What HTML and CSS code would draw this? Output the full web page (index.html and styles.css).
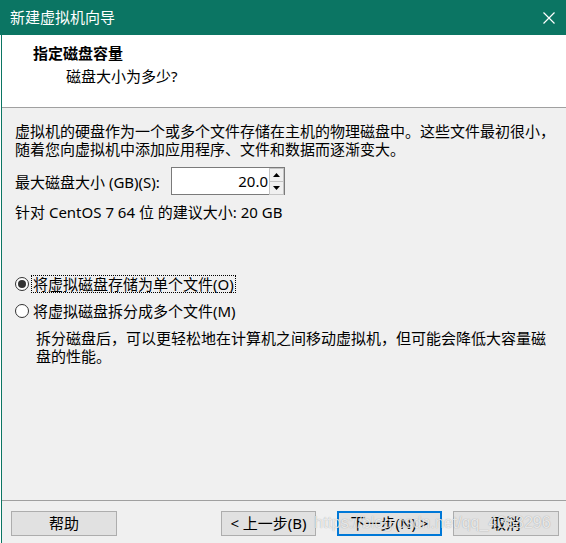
FILE: index.html
```html
<!DOCTYPE html>
<html>
<head>
<meta charset="utf-8">
<link rel="stylesheet" href="styles.css">
</head>
<body>
<div class="titlebar">
  <span class="title">新建虚拟机向导</span>
  <svg class="close" width="12" height="12" viewBox="0 0 12 12"><path d="M0.5 0.5 L11.5 11.5 M11.5 0.5 L0.5 11.5" stroke="#fff" stroke-width="1.2" fill="none"/></svg>
</div>
<div class="window">
  <div class="header">
    <div class="h-title">指定磁盘容量</div>
    <div class="h-sub">磁盘大小为多少?</div>
  </div>
  <div class="content">
    <p class="intro">虚拟机的硬盘作为一个或多个文件存储在主机的物理磁盘中。这些文件最初很小，<br>随着您向虚拟机中添加应用程序、文件和数据而逐渐变大。</p>
    <div class="size-row">
      <span class="label">最大磁盘大小 (GB)(S):</span>
      <div class="spin">
        <span class="spin-val">20.0</span>
        <div class="spin-btns">
          <div class="sbtn"><svg width="7" height="4" viewBox="0 0 7 4"><path d="M0 4 L3.5 0 L7 4 Z" fill="#000"/></svg></div>
          <div class="sbtn"><svg width="7" height="4" viewBox="0 0 7 4"><path d="M0 0 L3.5 4 L7 0 Z" fill="#000"/></svg></div>
        </div>
      </div>
    </div>
    <p class="advice">针对 CentOS 7 64 位 的建议大小: 20 GB</p>
    <div class="radios">
      <div class="radio-row">
        <span class="radio checked"></span>
        <span class="rlabel focus">将虚拟磁盘存储为单个文件(O)</span>
      </div>
      <div class="radio-row">
        <span class="radio"></span>
        <span class="rlabel">将虚拟磁盘拆分成多个文件(M)</span>
      </div>
      <p class="desc">拆分磁盘后，可以更轻松地在计算机之间移动虚拟机，但可能会降低大容量磁<br>盘的性能。</p>
    </div>
  </div>
  <div class="footer">
    <div class="btn help">帮助</div>
    <div class="btn back">&lt; 上一步(B)</div>
    <div class="btn next">下一步(N) &gt;</div>
    <div class="btn cancel">取消</div>
    <div class="watermark">https://blog.csdn.net/qq_4368296</div>
  </div>
</div>
</body>
</html>
```
FILE: styles.css
```css
html { background: #fff; }
body {
  margin: 0;
  width: 566px;
  height: 543px;
  overflow: hidden;
  font-family: "Noto Sans", "Noto Sans CJK SC", sans-serif;
  font-size: 15px;
  color: #000;
}
.titlebar {
  height: 35px;
  background: #0b7563;
  color: #fff;
  display: flex;
  align-items: center;
  justify-content: space-between;
  padding: 0 11px 0 10px;
}
.title { font-size: 15px; line-height: 35px; }
.close { display: block; margin-top: 1px; }
.window {
  margin-left: 1px;
  border-left: 1px solid #0b7563;
  height: 508px;
  background: #f0f0f0;
  display: flex;
  flex-direction: column;
  position: relative;
}
.header {
  background: #fff;
  border-bottom: 1px solid #a0a0a0;
  padding: 8px 0 0 31px;
  box-sizing: border-box;
  height: 73px;
}
.h-title { font-weight: bold; line-height: 20px; height: 20px; }
.h-sub { line-height: 20px; padding-left: 33px; margin-top: 3px; }
.content {
  padding: 14px 0 0 13px;
  flex: 1;
}
p { margin: 0; }
.intro { line-height: 18px; }
.size-row {
  display: flex;
  align-items: center;
  margin-top: 9px;
  height: 28px;
}
.label { width: 156px; }
.spin {
  width: 114px;
  height: 28px;
  box-sizing: border-box;
  border: 1px solid #7a7a7a;
  background: #fff;
  display: flex;
}
.spin-val {
  flex: 1;
  text-align: right;
  line-height: 26px;
  padding-right: 1px;
}
.spin-btns {
  width: 15px;
  display: flex;
  flex-direction: column;
}
.sbtn {
  flex: 1;
  background: #f0f0f0;
  border: 1px solid #c4c4c4;
  margin: 0 0 -1px 0;
  display: flex;
  align-items: center;
  justify-content: center;
}
.advice { line-height: 18px; margin-top: 8px; }
.radios { margin-top: 54px; }
.radio-row {
  display: flex;
  align-items: center;
  height: 18px;
  margin-bottom: 9px;
}
.radio {
  width: 14px;
  height: 14px;
  box-sizing: border-box;
  border: 1px solid #333;
  border-radius: 50%;
  background: #fff;
  margin: 0 2px 0 0;
  position: relative;
}
.radio.checked::after {
  content: "";
  position: absolute;
  left: 2px;
  top: 2px;
  width: 8px;
  height: 8px;
  border-radius: 50%;
  background: #333;
}
.rlabel { padding: 0 1px; line-height: 16px; border: 1px solid transparent; }
.rlabel.focus { border: 1px dotted #000; }
.desc { line-height: 18px; padding-left: 21px; margin-top: 3px; }
.footer {
  border-top: 1px solid #a0a0a0;
  height: 43px;
  position: relative;
  display: flex;
  padding: 10px 0 0 9px;
  box-sizing: border-box;
}
.btn {
  height: 25px;
  box-sizing: border-box;
  border: 1px solid #adadad;
  background: #e1e1e1;
  text-align: center;
  line-height: 23px;
  font-size: 15px;
}
.help { width: 106px; }
.back { width: 95px; margin-left: 104px; }
.next { width: 105px; margin-left: 21px; border: 2px solid #0078d7; line-height: 21px; }
.cancel { width: 106px; margin-left: 11px; }
.watermark {
  position: absolute;
  left: 312px;
  top: 13px;
  font-family: "Liberation Sans", sans-serif;
  font-size: 16px;
  line-height: 18px;
  color: rgba(255,255,255,0.75);
  text-shadow: 0 0 1px rgba(0,0,0,0.35);
  white-space: nowrap;
  pointer-events: none;
}
```
